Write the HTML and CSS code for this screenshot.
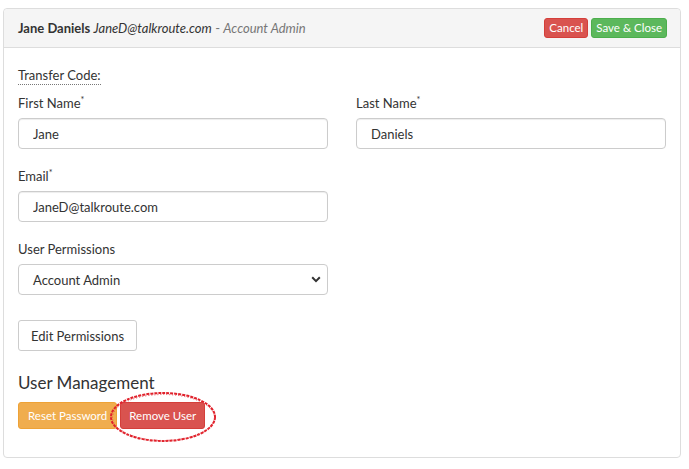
FILE: index.html
```html
<!DOCTYPE html>
<html lang="en">
<head>
  <meta charset="UTF-8" />
  <meta name="viewport" content="width=device-width, initial-scale=1.0"/>
  <title>Edit User - Jane Daniels</title>
  <link rel="stylesheet" href="styles.css">
</head>
<body>
  <div class="panel">
    <div class="panel-heading">
      <div class="title">
        <strong>Jane Daniels</strong> <em>JaneD@talkroute.com</em> <span class="muted">- <em>Account Admin</em></span>
      </div>
      <div class="actions">
        <button class="btn btn-sm btn-danger">Cancel</button>
        <button class="btn btn-sm btn-success">Save &amp; Close</button>
      </div>
    </div>

    <div class="panel-body">
      <abbr class="transfer">Transfer Code:</abbr>

      <div class="row">
        <div class="field">
          <label for="first">First Name<sup>*</sup></label>
          <input type="text" id="first" value="Jane" />
        </div>
        <div class="field">
          <label for="last">Last Name<sup>*</sup></label>
          <input type="text" id="last" value="Daniels" />
        </div>
      </div>

      <div class="row">
        <div class="field">
          <label for="email">Email<sup>*</sup></label>
          <input type="text" id="email" value="JaneD@talkroute.com" />
        </div>
      </div>

      <div class="row">
        <div class="field">
          <label for="perm">User Permissions</label>
          <div class="select">
            <span>Account Admin</span>
            <svg width="10" height="7" viewBox="0 0 10 7"><path d="M1.2 1.3 5 5.1 8.8 1.3" fill="none" stroke="#333" stroke-width="2"/></svg>
          </div>
        </div>
      </div>

      <button class="btn btn-default">Edit Permissions</button>

      <h3>User Management</h3>
      <div class="mgmt">
        <button class="btn btn-warning">Reset Password</button>
        <button class="btn btn-danger">Remove User</button>
        <svg class="circle" width="112" height="56" viewBox="0 0 112 56">
          <ellipse cx="56" cy="28" rx="52" ry="24" fill="none" stroke="#e0202a" stroke-width="2" stroke-dasharray="3 1"/>
          <ellipse cx="56.5" cy="28.5" rx="51" ry="23" fill="none" stroke="#e84048" stroke-width="1" stroke-dasharray="1 2"/>
        </svg>
      </div>
    </div>
  </div>
</body>
</html>
```

FILE: styles.css
```css
body {
  margin: 0;
  padding: 8px 8px 0 3px;
  font-family: Lato, 'Open Sans', sans-serif;
  font-size: 13px;
  color: #333;
  background: #fff;
}

.panel {
  border: 1px solid #ddd;
  border-radius: 4px;
  height: 450px;
  box-sizing: border-box;
}

.panel-heading {
  display: flex;
  justify-content: space-between;
  align-items: center;
  height: 39px;
  box-sizing: border-box;
  padding: 0 13px 0 14px;
  background: #f5f5f5;
  border-bottom: 1px solid #ddd;
  border-radius: 4px 4px 0 0;
}

.title {
  font-size: 13px;
  color: #333;
}

.title .muted {
  color: #777;
}

.actions {
  display: flex;
  gap: 3px;
}

.btn {
  font-family: inherit;
  font-size: 13px;
  border: 1px solid transparent;
  border-radius: 3px;
  padding: 6px 12px;
  cursor: pointer;
  color: #fff;
  line-height: 16px;
}

.btn-sm {
  font-size: 11.5px;
  padding: 1px 4px;
  height: 20px;
  line-height: 16px;
}

.btn-danger {
  background: #d9534f;
  border-color: #d43f3a;
}

.btn-success {
  background: #5cb85c;
  border-color: #4cae4c;
}

.btn-warning {
  background: #f0ad4e;
  border-color: #eea236;
}

.btn-default {
  background: #fff;
  border-color: #ccc;
  color: #333;
  height: 31px;
  padding: 0 12px;
  margin-top: 8px;
}

.panel-body {
  padding: 19px 14px 0 14px;
}

.transfer {
  display: inline-block;
  text-decoration: none;
  border-bottom: 1px dotted #777;
  line-height: 17px;
  margin-bottom: 8px;
}

.row {
  display: flex;
  gap: 28px;
}

.field {
  width: 310px;
  margin-bottom: 17px;
}

label {
  display: block;
  line-height: 17px;
  margin-bottom: 6px;
  margin-top: 2px;
}

sup {
  font-size: 9px;
  line-height: 0;
}

input {
  display: block;
  width: 100%;
  box-sizing: border-box;
  height: 31px;
  padding: 0 14px;
  font-family: inherit;
  font-size: 13px;
  color: #333;
  border: 1px solid #ccc;
  border-radius: 4px;
  box-shadow: inset 0 1px 1px rgba(0, 0, 0, 0.075);
}

.select {
  display: flex;
  justify-content: space-between;
  align-items: center;
  height: 31px;
  box-sizing: border-box;
  padding: 0 6px 0 14px;
  border: 1px solid #ccc;
  border-radius: 4px;
}

h3 {
  font-size: 17px;
  font-weight: normal;
  margin: 21px 0 8px 0;
  line-height: 22px;
}

.mgmt {
  position: relative;
  display: flex;
  gap: 3px;
}

.mgmt .btn {
  font-size: 11.5px;
  height: 27px;
  padding: 0 9px;
}

.mgmt .btn-danger {
  padding: 0 8px;
}

.circle {
  position: absolute;
  left: 89px;
  top: -13px;
  pointer-events: none;
}
```
